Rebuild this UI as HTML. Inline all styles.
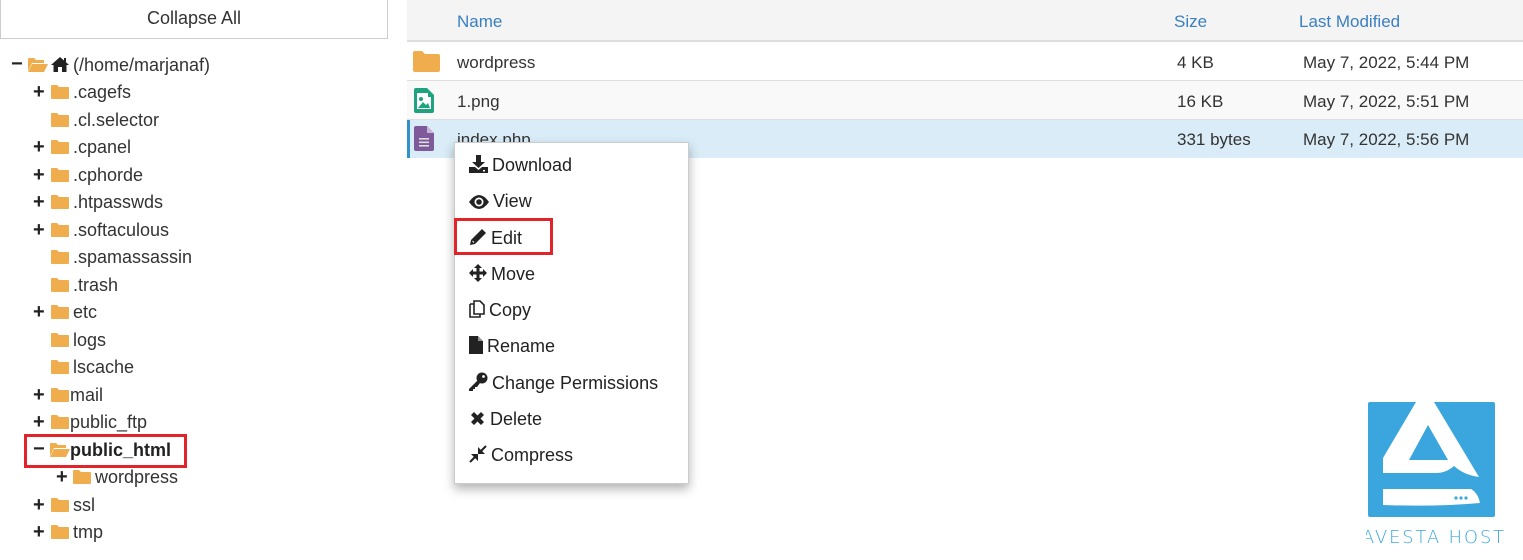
<!DOCTYPE html>
<html><head><meta charset="utf-8"><style>
*{margin:0;padding:0;box-sizing:border-box}
body{width:1523px;height:560px;background:#fff;position:relative;overflow:hidden;font-family:"Liberation Sans",sans-serif;color:#333}
.a{position:absolute;white-space:nowrap}
.t{font-size:18px;line-height:20px;color:#333}
.fold{position:absolute;width:20px;height:16px}
.pm{position:absolute;font-size:20px;font-weight:bold;color:#222;line-height:20px}
.mi{position:absolute;left:469px;font-size:18px;line-height:20px;color:#222}
.mi svg{vertical-align:-2px;margin-right:4px}
.c{font-size:17px;color:#333}
</style></head><body>
<svg width="0" height="0" style="position:absolute"><defs>
<symbol id="f" viewBox="0 0 20 16"><path d="M1 2Q1 1 2 1H7L9 3H18Q19 3 19 4V14Q19 15 18 15H2Q1 15 1 14Z" fill="#f0ad4e"/></symbol>
<symbol id="o" viewBox="0 0 22 16"><path d="M1 2Q1 1 2 1H7L9 3H17V6H5L1 14Z" fill="#f0ad4e"/><path d="M5 7H21L17 15H1Z" fill="#f0ad4e"/></symbol>
</defs></svg>

<div class="a" style="left:0;top:0;width:388px;height:39px;border:1px solid #ccc;border-top:none;text-align:center;font-size:18px;line-height:36px;color:#333">Collapse All</div>

<!-- tree -->
<div class="pm" style="left:11px;top:54px">−</div>
<svg class="fold" style="left:27px;top:57px;width:22px" viewBox="0 0 22 16"><use href="#o"/></svg>
<svg class="a" style="left:50px;top:56px" width="20" height="17" viewBox="0 0 20 17"><path d="M10 1L1 9H3.5V16H8V11H12V16H16.5V9H19L16 6.3V2H14V4.5Z" fill="#222"/></svg>
<div class="a t" style="left:73px;top:55px">(/home/marjanaf)</div>

<div class="pm" style="left:33px;top:82px">+</div><svg class="fold" style="left:50px;top:84px"><use href="#f"/></svg><div class="a t" style="left:73px;top:82px">.cagefs</div>
<svg class="fold" style="left:50px;top:112px"><use href="#f"/></svg><div class="a t" style="left:73px;top:110px">.cl.selector</div>
<div class="pm" style="left:33px;top:137px">+</div><svg class="fold" style="left:50px;top:139px"><use href="#f"/></svg><div class="a t" style="left:73px;top:137px">.cpanel</div>
<div class="pm" style="left:33px;top:165px">+</div><svg class="fold" style="left:50px;top:167px"><use href="#f"/></svg><div class="a t" style="left:73px;top:165px">.cphorde</div>
<div class="pm" style="left:33px;top:192px">+</div><svg class="fold" style="left:50px;top:194px"><use href="#f"/></svg><div class="a t" style="left:73px;top:192px">.htpasswds</div>
<div class="pm" style="left:33px;top:220px">+</div><svg class="fold" style="left:50px;top:222px"><use href="#f"/></svg><div class="a t" style="left:73px;top:220px">.softaculous</div>
<svg class="fold" style="left:50px;top:249px"><use href="#f"/></svg><div class="a t" style="left:73px;top:247px">.spamassassin</div>
<svg class="fold" style="left:50px;top:277px"><use href="#f"/></svg><div class="a t" style="left:73px;top:275px">.trash</div>
<div class="pm" style="left:33px;top:302px">+</div><svg class="fold" style="left:50px;top:304px"><use href="#f"/></svg><div class="a t" style="left:73px;top:302px">etc</div>
<svg class="fold" style="left:50px;top:332px"><use href="#f"/></svg><div class="a t" style="left:73px;top:330px">logs</div>
<svg class="fold" style="left:50px;top:359px"><use href="#f"/></svg><div class="a t" style="left:73px;top:357px">lscache</div>
<div class="pm" style="left:33px;top:385px">+</div><svg class="fold" style="left:50px;top:387px"><use href="#f"/></svg><div class="a t" style="left:70px;top:385px">mail</div>
<div class="pm" style="left:33px;top:412px">+</div><svg class="fold" style="left:50px;top:414px"><use href="#f"/></svg><div class="a t" style="left:70px;top:412px">public_ftp</div>
<div class="a" style="left:24px;top:434px;width:163px;height:34px;border:3px solid #e2242a"></div>
<div class="pm" style="left:33px;top:439px">−</div><svg class="fold" style="left:49px;top:442px;width:22px" viewBox="0 0 22 16"><use href="#o"/></svg><div class="a t" style="left:70px;top:440px;font-weight:bold;color:#222">public_html</div>
<div class="pm" style="left:56px;top:467px">+</div><svg class="fold" style="left:72px;top:469px"><use href="#f"/></svg><div class="a t" style="left:95px;top:467px">wordpress</div>
<div class="pm" style="left:33px;top:495px">+</div><svg class="fold" style="left:50px;top:497px"><use href="#f"/></svg><div class="a t" style="left:73px;top:495px">ssl</div>
<div class="pm" style="left:33px;top:522px">+</div><svg class="fold" style="left:50px;top:524px"><use href="#f"/></svg><div class="a t" style="left:73px;top:522px">tmp</div>

<!-- table -->
<div class="a" style="left:407px;top:0;width:1116px;height:42px;background:#f4f4f4;border-bottom:2px solid #ddd"></div>
<div class="a" style="left:457px;top:12px;font-size:17px;color:#3a7fc1">Name</div>
<div class="a" style="left:1174px;top:12px;font-size:17px;color:#3a7fc1">Size</div>
<div class="a" style="left:1299px;top:12px;font-size:17px;color:#3a7fc1">Last Modified</div>

<div class="a" style="left:407px;top:42px;width:1116px;height:39px;border-bottom:1px solid #ddd"></div>
<svg class="a" style="left:413px;top:51px" width="27" height="21" viewBox="0 0 27 21"><path d="M0 2Q0 0 2 0H9L12 3H25Q27 3 27 5V19Q27 21 25 21H2Q0 21 0 19Z" fill="#f0ad4e"/></svg>
<div class="a c" style="left:457px;top:53px">wordpress</div><div class="a c" style="left:1177px;top:53px">4 KB</div><div class="a c" style="left:1303px;top:53px">May 7, 2022, 5:44 PM</div>

<div class="a" style="left:407px;top:81px;width:1116px;height:39px;background:#f9f9f9;border-bottom:1px solid #ddd"></div>
<svg class="a" style="left:414px;top:88px" width="20" height="25" viewBox="0 0 20 25"><path d="M2 0H13L20 7V23Q20 25 18 25H2Q0 25 0 23V2Q0 0 2 0Z" fill="#1fa37e"/><rect x="3" y="5" width="11" height="16" fill="#fff"/><rect x="3" y="9" width="14" height="12" fill="#fff"/><circle cx="7" cy="11" r="2" fill="#1fa37e"/><path d="M4 20L9 14L12 17L14 15L16 20Z" fill="#1fa37e"/></svg>
<div class="a c" style="left:457px;top:92px">1.png</div><div class="a c" style="left:1177px;top:92px">16 KB</div><div class="a c" style="left:1303px;top:92px">May 7, 2022, 5:51 PM</div>

<div class="a" style="left:407px;top:120px;width:1116px;height:38px;background:#d9ecf7;border-left:3px solid #3192c9"></div>
<svg class="a" style="left:414px;top:126px" width="20" height="25" viewBox="0 0 20 25"><path d="M2 0H13L20 7V23Q20 25 18 25H2Q0 25 0 23V2Q0 0 2 0Z" fill="#7e5a9b"/><path d="M13 0V7H20Z" fill="#c8b6d8"/><rect x="5" y="12" width="10" height="1.6" fill="#ddd"/><rect x="5" y="15.5" width="10" height="1.6" fill="#ddd"/><rect x="5" y="19" width="10" height="1.6" fill="#ddd"/></svg>
<div class="a c" style="left:457px;top:130px">index.php</div><div class="a c" style="left:1177px;top:130px">331 bytes</div><div class="a c" style="left:1303px;top:130px">May 7, 2022, 5:56 PM</div>

<!-- context menu -->
<div class="a" style="left:454px;top:142px;width:235px;height:342px;background:#fff;border:1px solid #ccc;box-shadow:0 5px 10px rgba(0,0,0,.3)"></div>
<div class="mi" style="top:155px"><svg width="19" height="18" viewBox="0 0 19 18"><path d="M7 0H12V7H16L9.5 13L3 7H7Z" fill="#222"/><path d="M0 12H6L9.5 15L13 12H19V18H0Z" fill="#222"/><rect x="14" y="15" width="2" height="1.5" fill="#fff"/></svg>Download</div>
<div class="mi" style="top:191px"><svg width="20" height="14" viewBox="0 0 20 14"><path d="M0 7Q5 0 10 0Q15 0 20 7Q15 14 10 14Q5 14 0 7Z" fill="#222"/><circle cx="10" cy="7" r="4.5" fill="#fff"/><circle cx="10" cy="7" r="2.8" fill="#222"/></svg>View</div>
<div class="a" style="left:454px;top:218px;width:99px;height:37px;border:3px solid #e2242a"></div>
<div class="mi" style="top:228px"><svg width="18" height="18" viewBox="0 0 18 18"><path d="M13 1L17 5L6 16L1 17L2 12Z" fill="#222"/><path d="M3.5 13L5 14.5" stroke="#fff" stroke-width="1"/></svg>Edit</div>
<div class="mi" style="top:264px"><svg width="18" height="18" viewBox="0 0 18 18"><path d="M9 0L13 4H10.5V7.5H14V5L18 9L14 13V10.5H10.5V14H13L9 18L5 14H7.5V10.5H4V13L0 9L4 5V7.5H7.5V4H5Z" fill="#222"/></svg>Move</div>
<div class="mi" style="top:300px"><svg width="16" height="18" viewBox="0 0 16 18"><path d="M5 1H11L15 5V14H5Z" fill="none" stroke="#222" stroke-width="1.6"/><path d="M1 4H5M1 4V17H11V14" fill="none" stroke="#222" stroke-width="1.6"/></svg>Copy</div>
<div class="mi" style="top:336px"><svg width="14" height="18" viewBox="0 0 14 18"><path d="M0 0H9L14 5V18H0Z" fill="#222"/><path d="M9 0V5H14" fill="#fff" opacity=".5"/></svg>Rename</div>
<div class="mi" style="top:372px"><svg width="19" height="19" viewBox="0 0 19 19"><circle cx="13" cy="6" r="5.5" fill="#222"/><path d="M9 8L0 17V19H4V17H6V15H8L11 11Z" fill="#222"/><circle cx="14.5" cy="4.5" r="1.4" fill="#fff"/></svg>Change Permissions</div>
<div class="mi" style="top:409px"><svg width="17" height="17" viewBox="0 0 17 17"><path d="M2 5L5 2L8.5 5.5L12 2L15 5L11.5 8.5L15 12L12 15L8.5 11.5L5 15L2 12L5.5 8.5Z" fill="#222"/></svg>Delete</div>
<div class="mi" style="top:445px"><svg width="18" height="18" viewBox="0 0 18 18"><path d="M17 1L11 7M1 17L7 11" stroke="#222" stroke-width="2"/><path d="M9 2V9H16Z M2 9H9V16Z" fill="#222"/></svg>Compress</div>

<!-- logo -->
<svg class="a" style="left:1366px;top:401px" width="140" height="145" viewBox="0 0 140 145">
<rect x="2" y="1" width="127" height="115" rx="2" fill="#3aa6dd"/>
<path d="M50 1H68L113 76Q98 74 88 65Q80 72 70 72H17V57Z" fill="#fff"/>
<path d="M62 24L43 59H82Z" fill="#3aa6dd"/>
<path d="M17 88H105Q112 92 114 102Q70 106 17 104Z" fill="#fff"/>
<circle cx="90" cy="97" r="1.6" fill="#3aa6dd"/><circle cx="95" cy="97" r="1.6" fill="#3aa6dd"/><circle cx="100" cy="97" r="1.6" fill="#3aa6dd"/>
<text x="-4" y="142" font-family="DejaVu Sans,sans-serif" font-size="18" font-weight="300" fill="#3aa6dd" letter-spacing="2" textLength="144" lengthAdjust="spacingAndGlyphs">AVESTA HOST</text>
</svg>
</body></html>
